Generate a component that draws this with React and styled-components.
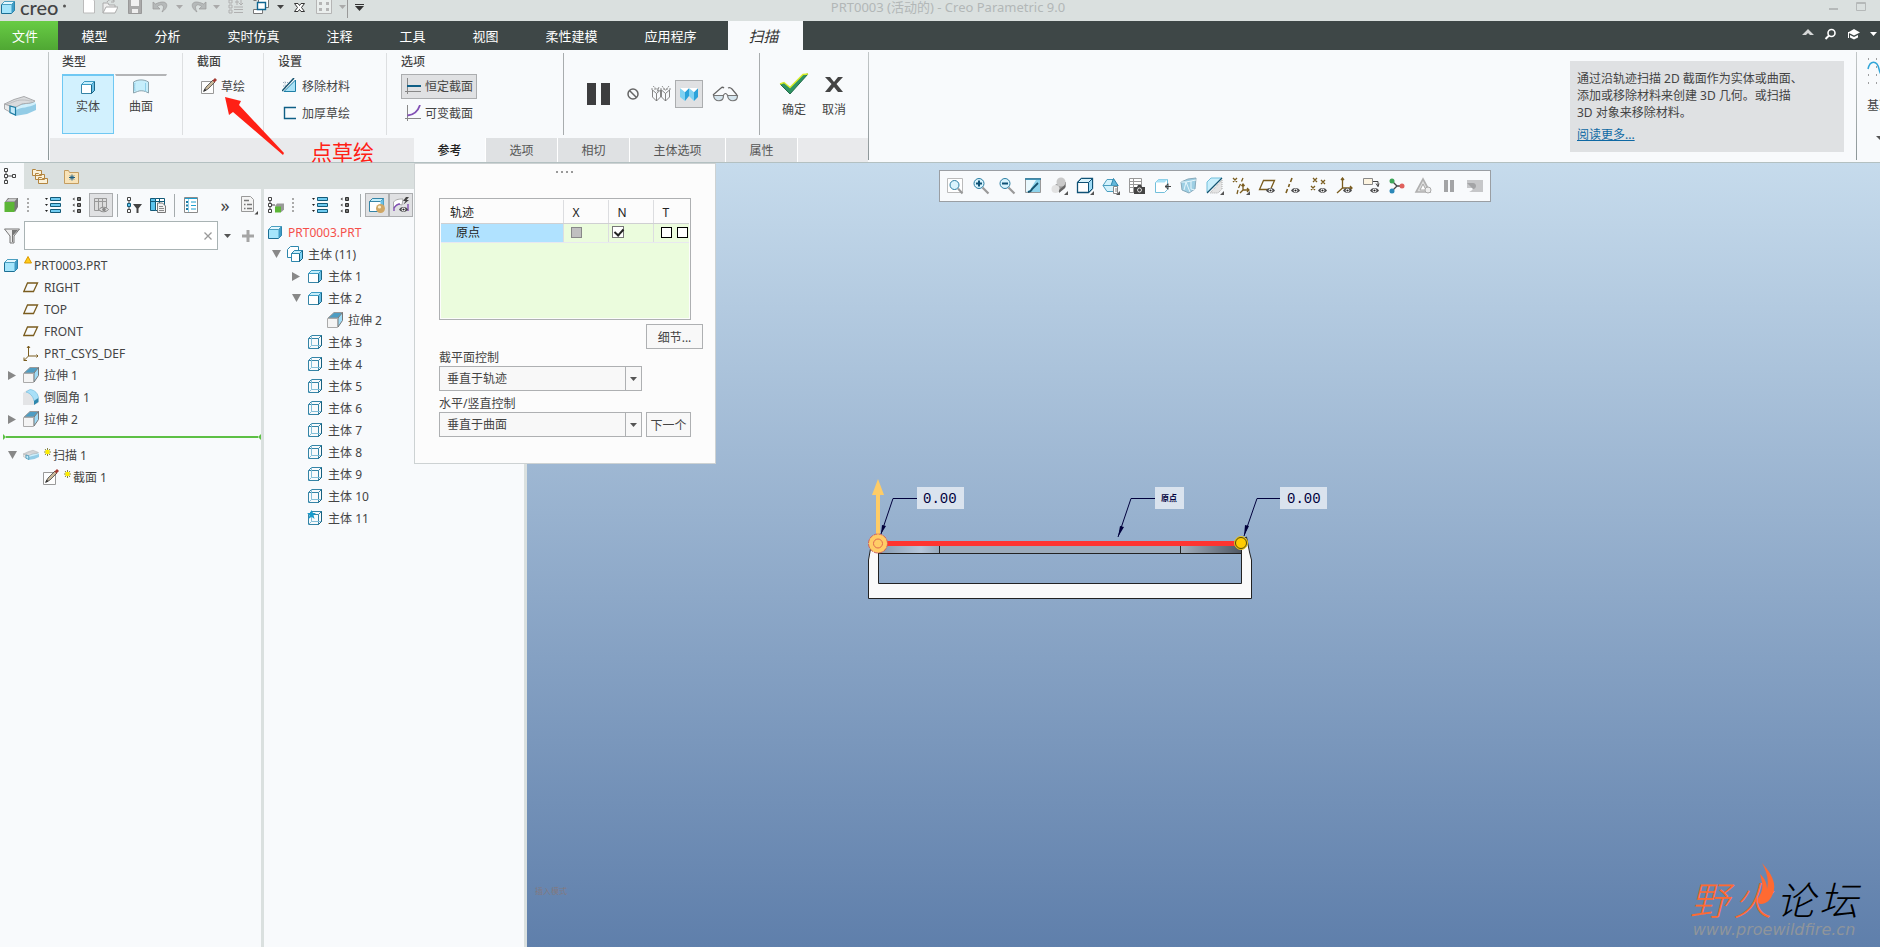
import React, { useState } from "react";
import styled, { createGlobalStyle } from "styled-components";

const GlobalStyle = createGlobalStyle`
  * {
    box-sizing: border-box;
  }

  body {
    margin: 0;
    overflow: hidden;
    font-family: "Noto Sans", "Noto Sans CJK SC", sans-serif;
    font-size: 12px;
    color: #444;
    background: #f8fafc;
  }

  button,
  input,
  select {
    font: inherit;
    color: inherit;
    margin: 0;
  }

  button {
    background: none;
    border: none;
    padding: 0;
    cursor: pointer;
  }

  svg {
    display: block;
    flex: none;
  }
`;

/* ---------- icons ---------- */

function Icon({ w = 16, h = 16, box, children }) {
  return (
    <svg width={w} height={h} viewBox={box || `0 0 ${w} ${h}`} fill="none" aria-hidden="true">
      {children}
    </svg>
  );
}

const PartIcon = () => (
  <Icon>
    <path d="M1.5 5.5l3-3h10v9l-3 3h-10z" fill="#a5e5fb" stroke="#1d6f94" />
    <path d="M11.5 5.5l3-3v9l-3 3z" fill="#3f9cc6" />
    <path d="M1.5 5.5l3-3h10l-3 3z" fill="#e4f8ff" stroke="#4b9fc0" />
  </Icon>
);

const BodyIcon = () => (
  <Icon>
    <path d="M1.5 5.5l3-3h10v9l-3 3h-10z" fill="#fff" stroke="#3584a6" />
    <path d="M11.5 5.5l3-3v9l-3 3z" fill="#6bc0e6" stroke="#1b6686" />
    <path d="M1.5 5.5l3-3h10l-3 3z" fill="#c5eefb" stroke="#3d9cc4" />
  </Icon>
);

const BodiesIcon = () => (
  <Icon>
    <path d="M.5 3.500l3-3h8v8l-3 3h-8z" fill="#fff" stroke="#2d87ad" />
    <path d="M4.500 7.500l3-3h8v8l-3 3h-8z" fill="#fff" stroke="#2d87ad" />
    <path d="M12.500 7.500l3-3v8l-3 3z" fill="#7cd2f5" stroke="#16607f" />
    <path d="M4.500 7.500l3-3h8l-3 3z" fill="#c5eefb" stroke="#2d87ad" />
  </Icon>
);

const EmptyBodyIcon = ({ star }) => (
  <Icon>
    <path d="M1.500 4.500l3-3h10v10l-3 3h-10zM1.500 4.500h10v10M11.500 4.500l3-3" stroke="#3584a6" />
    <path d="M4.500 1.500v10h10M4.500 11.500l-3 3" stroke="#83bfd8" />
    <path d="M14.500 1.500v10l-3 3" stroke="#17607f" />
    {star && <path d="M4.500 0l1.500 3H9L6.500 5l1 4-3-2.200-3 2.200 1-4L0 3h3z" fill="#1a9ccc" />}
  </Icon>
);

const ExtrudeIcon = () => (
  <Icon>
    <path d="M1 6l6-5.500h8.500L11 6z" fill="#4d9dc3" stroke="#999" />
    <path d="M11 6l4.500-5.500v8L11 15z" fill="#9fdcf7" stroke="#777" />
    <path d="M.5 6.500h10v9H.5z" fill="#f4f4f4" stroke="#aaa" />
  </Icon>
);

const RoundIcon = () => (
  <Icon>
    <path d="M0 4l4-3c6-1 11 2 11.500 9v4L11 16H0z" fill="#e3e4e6" />
    <path d="M3 3l4-2.500c5 .5 8 4 8.500 8.500L11 12C10 7 7 4 3 3z" fill="#a9e0f8" stroke="#6ab8dc" strokeWidth=".6" />
    <path d="M11 12l4.500-3v4L11 16z" fill="#2d87ad" />
  </Icon>
);

const PlaneIcon = () => (
  <Icon>
    <path d="M4.500 4h10l-4 8.500H.8z" stroke="#7a5c1e" strokeWidth="1.300" />
  </Icon>
);

const CsysIcon = () => (
  <Icon>
    <path d="M5.500 1v10H15M5.500 11L1 15.500M4 3l1.500-2L7 3M13.500 9.500L15 11l-1.500 1.500M1 12.500v3h3" stroke="#7a5c1e" />
  </Icon>
);

const SweepIcon = ({ w = 16, h = 16 }) => (
  <Icon w={w} h={h} box="0 0 32 20">
    <path d="M10 11l8-4 10-2 4 3v6l-9 4-12 2z" fill="#93cce6" />
    <path d="M10 11c6-3 12-2 21-5l1 2c-8 4-14 3-20 6z" fill="#d0effb" />
    <path d="M.5 8L10 3.500 20 .5l11 4.500c-4 3-9 2-13 3l-7 3.500z" fill="#dadbdd" stroke="#a9aaac" />
    <path d="M3 8c6-1 8-4 15-4s6 1 10 1" stroke="#bdbec0" />
    <path d="M.5 8l5.500 2v6L.5 13z" fill="#e8e9ea" stroke="#a9aaac" />
    <path d="M6 10l5.500 1.500V19L6 16.500z" fill="#c5eafa" stroke="#1d7ca3" strokeWidth="1.200" />
  </Icon>
);

const SketchIcon = () => (
  <Icon>
    <path d="M.5 3.500h12v12H.5z" fill="#fdfdfd" stroke="#999" />
    <path d="M3 13l2-4 7-7 2 2-7 7z" fill="#c9b89a" stroke="#444" strokeWidth=".8" />
    <path d="M11.500 2.500L14 0l2 2-2.500 2.500z" fill="#a33a32" />
    <path d="M2 14l1.500-3.500 2 2z" fill="#333" />
  </Icon>
);

const ListBlueIcon = () => (
  <Icon>
    <path d="M5.500.5h10v3h-10zM5.500 6.500h10v3h-10zM5.500 12.500h10v3h-10z" fill="#6fcbf0" stroke="#135a78" />
    <path d="M0 1h3L1.500 3zM0 7h3L1.500 9zM0 13h3l-1.500 2z" fill="#222" />
  </Icon>
);

const ListGreyIcon = () => (
  <Icon w={9}>
    <path d="M5.500.5h3v3h-3zM5.500 6.500h3v3h-3zM5.500 12.500h3v3h-3z" fill="#777" stroke="#333" />
    <path d="M2.500.5l-2 1.500 2 1.500zM2.500 6.500l-2 1.500 2 1.500zM2.500 12.500l-2 1.500 2 1.500z" fill="#444" />
  </Icon>
);

const Eye = ({ x = 0, y = 0 }) => (
  <g transform={`translate(${x} ${y})`}>
    <path d="M0 3.500C2 .2 7 .2 9 3.500 7 6.800 2 6.800 0 3.500z" fill="#4a4a4c" />
    <circle cx="4.500" cy="3.500" r="1.900" fill="#fff" />
    <circle cx="4.500" cy="3.500" r="1.100" fill="#222" />
  </g>
);

const TreeTabIcon = () => (
  <Icon w={12}>
    <path d="M.5.5h3v3h-3zM.5 6.500h3v3h-3zM.5 12.500h3v3h-3zM8.500 6.500h3v3h-3zM2 4v2M2 10v2M4 8h4" stroke="#444" />
  </Icon>
);

const FoldersIcon = () => (
  <Icon>
    <path d="M.5 1.500h3l1 1h5v5h-9zM3.500 5.500h3l1 1h5v5h-9zM6.500 9.500h3l1 1h5v5h-9z" fill="#fbf1d9" stroke="#b3853f" />
  </Icon>
);

const FavIcon = () => (
  <Icon>
    <path d="M.5 2.500h4l1 2h9v11H.5z" fill="#f8e3b8" stroke="#c49d60" />
    <path d="M8 6.500v6M5 9.500h6M6 7.500l4 4M10 7.500l-4 4" stroke="#1c5d82" />
  </Icon>
);

const GreenCubeIcon = () => (
  <Icon>
    <path d="M1 5l3-4h10v9l-3 5z" fill="#777" />
    <path d="M2 4.500l3-3h8l-2.500 3z" fill="#c9c9c9" />
    <path d="M.5 5h10v10H.5z" fill="#5cb637" />
  </Icon>
);

const TableEyeIcon = () => (
  <Icon>
    <path d="M1.500 1.500h12v12h-12zM1.500 4.500h12M5.500 1.500v12M9.500 1.500v12" fill="#dcdcdc" stroke="#999" />
    <path d="M6 12.500c2-3 7-3 9.500 0-2.500 3-7.500 3-9.500 0z" fill="#ddd" stroke="#888" />
    <circle cx="11" cy="12.500" r="1.800" fill="#888" />
  </Icon>
);

const TreeFilterIcon = () => (
  <Icon>
    <path d="M1.500.5h3v3h-3zM1.500 12.500h3v3h-3zM3 4v2M3 10v2" stroke="#444" />
    <path d="M1.500 6.500h3v3h-3z" fill="#5cc3ec" stroke="#135a78" />
    <path d="M7 7h9l-3.500 4.500V16h-2v-4.500z" fill="#444" />
  </Icon>
);

const ColumnsIcon = () => (
  <Icon>
    <path d="M.5 1.500h5v12h-5z" fill="#5cc3ec" stroke="#135a78" />
    <path d="M5.500 1.500h9v12h-9z" fill="#fff" stroke="#135a78" />
    <path d="M.5 4.500h14M9.500 1.500v12" stroke="#135a78" />
    <path d="M7.500 6h5l3 3v6.500h-8z" fill="#f2f2f2" stroke="#777" />
    <path d="M9 9.500h4M9 11.500h5M9 13.500h5" stroke="#888" />
  </Icon>
);

const SheetIcon = () => (
  <Icon w={14}>
    <path d="M.5.5h13v15H.5z" fill="#fff" stroke="#8a8a8a" />
    <path d="M1 1.500h12" stroke="#1fa0d0" />
    <path d="M4.500 2v13" stroke="#8fd0ea" />
    <path d="M2 5h2M2 8.500h2M2 12h2" stroke="#1b7aa3" strokeWidth="2" />
    <path d="M7 5h5M7 8.500h5M7 12h5" stroke="#1fa0d0" />
  </Icon>
);

const PageIcon = () => (
  <Icon w={17} h={19}>
    <path d="M.5.5h9l3 3v12H.5z" fill="#f4f4f4" stroke="#999" />
    <path d="M3 8.500h1.500M6 8.500h5M3 12.500h1.500M6 12.500h5M3 4.500h5" stroke="#777" strokeWidth="1.300" />
    <path d="M17 15v3.500h-3.500z" fill="#444" />
  </Icon>
);

const TreeCubeIcon = () => (
  <Icon>
    <path d="M.5.5h3v3h-3zM.5 6.500h3v3h-3zM.5 12.500h3v3h-3zM2 4v2M2 10v2M4 8h3" stroke="#444" />
    <path d="M7 9l2-2.500h7v6L13.500 15z" fill="#999" />
    <path d="M7 9.500h6v6H7z" fill="#5cb637" />
  </Icon>
);

const BallBodyIcon = () => (
  <Icon>
    <path d="M.5 4.500l3-3h11v10l-3 3H.5z" fill="#fff" stroke="#3584a6" />
    <path d="M.5 4.500l3-3h11l-3 3z" fill="#c5eefb" stroke="#3584a6" />
    <path d="M11.500 4.500l3-3v10l-3 3z" fill="#6bc0e6" />
    <circle cx="11.500" cy="11.500" r="4.500" fill="#d0a765" />
    <circle cx="10.500" cy="10" r="1.600" fill="#fbeecd" />
  </Icon>
);

const SurfaceEyeIcon = () => (
  <Icon>
    <path d="M.5 11V5C3 2 7 2 10 2l-1 6-4-1z" fill="#fff" stroke="#aaa" />
    <path d="M1 14v-3c2-3 4-4 6-4M15 7v7" stroke="#8250b5" strokeWidth="1.400" />
    <path d="M13 0l-3 4h2.500l-2 3.500L16 3h-2.500L16 0z" fill="#444" />
    <Eye x={6} y={9} />
  </Icon>
);

const FunnelIcon = () => (
  <Icon>
    <path d="M.5 1h15L10 8v7H6V8z" fill="#ededed" stroke="#777" />
    <path d="M8 2h6L9 7.500V14H8z" fill="#777" />
  </Icon>
);

const SweepCutIcon = () => (
  <Icon>
    <path d="M2 13.500L13.500 2v11.500z" fill="#a9e2f7" stroke="#1f7fa6" />
    <path d="M1 4.500h8M3 3.500v8M1 8h4" stroke="#9ab" strokeDasharray="1 1" />
    <path d="M0 13L12 0" stroke="#14536f" strokeWidth="1.500" />
  </Icon>
);

const ThickIcon = () => (
  <Icon>
    <path d="M14 2.500H2.500v11H14" stroke="#0f5f86" strokeWidth="1.400" />
  </Icon>
);

const ConstIcon = () => (
  <Icon>
    <path d="M2.500 0v16M0 13.500h16" stroke="#888" />
    <path d="M2 8h14" stroke="#0f5f86" strokeWidth="2" />
  </Icon>
);

const VarIcon = () => (
  <Icon>
    <path d="M2.500 0v16M0 13.500h16" stroke="#888" />
    <path d="M2.500 10.500C9 10 13 6 15 0" stroke="#8250b5" strokeWidth="1.800" />
  </Icon>
);

const SurfaceIcon = () => (
  <Icon>
    <path d="M.5 3C5 .2 11 .2 15.500 3v11l-3-1.500c-3-1-6-1-8 0L.5 14z" fill="#c6eefb" stroke="#8aa4ae" />
    <path d="M2 12C1.500 9 1.500 6 2 4M12.500 12.500V4" stroke="#8fcfe8" />
  </Icon>
);

/* ---------- title bar ---------- */

const TitleBar = styled.header`
  display: grid;
  grid-template-columns: 1fr auto 1fr;
  grid-template-rows: 14px;
  align-items: center;
  height: 21px;
  background: #dae0df;
`;

const QuickAccess = styled.div`
  display: flex;
  align-items: center;
  height: 14px;
`;

const Brand = styled.span`
  display: flex;
  align-items: center;
  gap: 4px;
  width: 80px;
  font: 500 20px/12px Lato, sans-serif;
  color: #444;
`;

const Quick = styled.button`
  display: flex;
  justify-content: center;
  align-items: center;
  width: ${(props) => props.$w || 23}px;
  height: 14px;
`;

const Rule = styled.i`
  width: 1px;
  height: 22px;
  background: #999;
`;

const DocTitle = styled.span`
  padding-left: 16px;
  font-size: 13px;
  line-height: 14px;
  color: #b2b7b7;
`;

const WindowButtons = styled.div`
  display: flex;
  justify-content: flex-end;
  gap: 2px;
  padding-right: 7px;
`;

const Tri = ({ color = "#aaa", w = 7 }) => (
  <Icon w={w} h={4} box="0 0 7 4">
    <path d="M0 0h7L3.500 4z" fill={color} />
  </Icon>
);

function Title() {
  return (
    <TitleBar>
      <QuickAccess>
        <Brand>
          <PartIcon />
          creo
          <Icon w={3} h={8}><circle cx="1.500" cy="3" r="1.500" fill="#555" /></Icon>
        </Brand>
        <Quick $w={18} aria-label="新建">
          <Icon><path d="M2.500-2h8l3 4v12h-11z" fill="#fff" stroke="#bbb" /></Icon>
        </Quick>
        <Quick aria-label="打开">
          <Icon>
            <path d="M1 14V4h5l1 2h6v2" fill="#eee" stroke="#aaa" />
            <path d="M1 14L4 8h12l-3 6z" fill="#fff" stroke="#aaa" />
            <path d="M5 3c2-3 5-3 7-1M12-.5V3H9" stroke="#aaa" />
          </Icon>
        </Quick>
        <Quick $w={28} aria-label="保存">
          <Icon>
            <path d="M1.500.5h13v14h-13z" fill="#aaa" stroke="#999" />
            <path d="M4 0h8v7H4z" fill="#f1f1f1" />
            <path d="M5 10h6v4H5z" fill="#eee" />
          </Icon>
        </Quick>
        <Quick $w={22} aria-label="撤消">
          <Icon>
            <path d="M1 3v7h7L5.500 7.500C9 4 14 6 10 13c8-5 6-14-6.500-8z" fill="#b5b9b9" stroke="#999" strokeWidth=".7" />
          </Icon>
        </Quick>
        <Quick $w={16} aria-label="撤消列表"><Tri /></Quick>
        <Quick aria-label="重做">
          <Icon>
            <path d="M15 3v7H8l2.500-2.500C7 4 2 6 6 13c-8-5-6-14 6.500-8z" fill="#b5b9b9" stroke="#999" strokeWidth=".7" />
          </Icon>
        </Quick>
        <Quick $w={12} aria-label="重做列表"><Tri /></Quick>
        <Quick $w={27} aria-label="重新生成">
          <Icon>
            <path d="M1 1h3v3H1zM1 6h3v3H1zM1 11h3v3H1zM6 8h9M6 10.500h9M6 13.500h9M7 3h4M9 1v5M13 0v5M11 4l2 2 2-2" stroke="#b0b0b0" />
          </Icon>
        </Quick>
        <Quick aria-label="窗口">
          <Icon>
            <path d="M5.500.5h10v8h-10zM.5 10.500h9v4h-9zM.5 1.500h3" fill="#fff" stroke="#777" />
            <path d="M4.500 3.500h8v7h-8z" fill="#fff" stroke="#0f6590" strokeWidth="1.400" />
          </Icon>
        </Quick>
        <Quick $w={16} aria-label="窗口列表"><Tri color="#444" /></Quick>
        <Quick aria-label="关闭">
          <Icon w={13} h={13}>
            <path d="M1.500 2.500H5l1.500 2 1.500-2h3.500L8.500 6.500l3 4H8l-1.500-2-1.500 2H1.500l3-4z" fill="#fff" stroke="#333" />
          </Icon>
        </Quick>
        <Quick $w={26} aria-label="网格">
          <Icon>
            <path d="M.5.5h15v14H.5z" fill="#eaeeed" stroke="#b5b5b5" />
            <path d="M3 3h3v3H3zM10 3h3v3h-3zM3 9h3v3H3zM10 9h3v3h-3z" fill="#b5b5b5" />
          </Icon>
        </Quick>
        <Quick $w={10} aria-label="网格列表"><Tri /></Quick>
        <Rule />
        <Quick aria-label="自定义">
          <Icon w={9} h={7}>
            <path d="M0 .5h9" stroke="#333" />
            <path d="M0 2h9L4.500 7z" fill="#333" />
          </Icon>
        </Quick>
      </QuickAccess>
      <DocTitle>PRT0003 (活动的) - Creo Parametric 9.0</DocTitle>
      <WindowButtons>
        <Quick $w={25} aria-label="最小化">
          <Icon w={10} h={10}><path d="M0 6h9v2H0z" fill="#b5b9b9" /></Icon>
        </Quick>
        <Quick $w={25} aria-label="最大化">
          <Icon w={10} h={10}><path d="M.5.5h9v8h-9zM0 1.500h10" stroke="#b5b9b9" /></Icon>
        </Quick>
      </WindowButtons>
    </TitleBar>
  );
}

/* ---------- menu bar ---------- */

const MenuBar = styled.nav`
  display: flex;
  height: 29px;
  background: #3e4747;
`;

const MenuItem = styled.button`
  width: ${(props) => (props.$wide ? 99 : 73)}px;
  color: #fff;
  font-size: 13px;
`;

const FileItem = styled(MenuItem)`
  width: 58px;
  padding-right: 8px;
  background: linear-gradient(#68cc45, #4fa733);
`;

const ActiveItem = styled(MenuItem)`
  width: 75px;
  margin-left: 8px;
  padding-right: 4px;
  background: #f8fafc;
  color: #333;
  font-size: 15px;
  font-style: italic;
`;

const MenuTools = styled.div`
  display: flex;
  align-items: center;
  margin-left: auto;
  padding: 0 3px 4px 0;
  gap: 7px;
`;

const menus = ["模型", "分析", "实时仿真", "注释", "工具", "视图", "柔性建模", "应用程序"];

function Menu() {
  return (
    <MenuBar>
      <FileItem>文件</FileItem>
      {menus.map((name) => (
        <MenuItem key={name} $wide={name.length > 2}>{name}</MenuItem>
      ))}
      <ActiveItem>扫描</ActiveItem>
      <MenuTools>
        <button aria-label="折叠功能区">
          <Icon w={16} h={12}><path d="M2 7l6-6 6 6h-4L8 5 6 7z" fill="#d5d7d7" /></Icon>
        </button>
        <button aria-label="搜索">
          <Icon w={16} h={12}>
            <circle cx="8.500" cy="5" r="3.500" stroke="#fff" strokeWidth="1.600" />
            <path d="M6 7.500L2.500 11" stroke="#fff" strokeWidth="2" />
          </Icon>
        </button>
        <button aria-label="学习">
          <Icon w={16} h={12}>
            <path d="M2 4.500l6-3.500 6 3.500-6 3zM4 7l4 2 4-2v2.500l-4 2-4-2zM2 4h1v6H2z" fill="#fff" />
          </Icon>
        </button>
        <Quick $w={8} aria-label="更多"><Tri color="#fff" /></Quick>
      </MenuTools>
    </MenuBar>
  );
}

/* ---------- ribbon ---------- */

const Ribbon = styled.section`
  display: flex;
  height: 113px;
  border-bottom: 1px solid #b3c0c1;
  background: #f8fafc;
`;

const FeatureCell = styled.div`
  display: flex;
  align-items: center;
  width: 48px;
  padding-left: 4px;
`;

const Divider = styled.i`
  width: 1px;
  margin: 2px 0;
  background: linear-gradient(#c3c7c8, #8c9698);
`;

const Dashboard = styled.div`
  display: flex;
  flex-direction: column;
  padding-left: 1px;
`;

const Groups = styled.div`
  display: flex;
  height: 88px;
`;

const Group = styled.div`
  width: ${(props) => props.$w}px;
  padding: 4px 0 0 ${(props) => props.$pad || 14}px;
  border-right: 1px solid transparent;
  border-image: linear-gradient(
      transparent 5%,
      ${(props) => (props.$strong ? "#a8acae" : "#dddfe1")} 5%,
      ${(props) => (props.$strong ? "#a8acae" : "#dddfe1")} 95%,
      transparent 95%
    )
    1;
`;

const GroupTitle = styled.h2`
  margin: 0 0 4px;
  font-size: 12px;
  font-weight: 500;
  line-height: 16px;
`;

const TypeButton = styled.button`
  width: 52px;
  height: 60px;
  margin-right: 1px;
  padding-bottom: 16px;
  border: 1px solid ${(props) => (props.$on ? "#6fc8f3" : "transparent")};
  border-top: 2px solid ${(props) => (props.$on ? "#6fc8f3" : "#b3b4b6")};
  background: ${(props) => (props.$on ? "#d2f1fe" : "none")};

  svg {
    margin: 0 auto 2px;
  }
`;

const Tool = styled.button`
  display: flex;
  align-items: center;
  gap: 4px;
  height: 25px;
  margin-bottom: 2px;
  padding: 0 3px 1px;
  border: 1px solid ${(props) => (props.$on ? "#abadaf" : "transparent")};
  background: ${(props) => (props.$on ? "#e0e1e3" : "none")};
`;

const Controls = styled(Group)`
  display: flex;
  align-items: center;
  padding-top: 0;
`;

const Verdicts = styled.div`
  display: flex;
  align-items: center;
  width: 108px;
  padding: 3px 0 0 14px;
`;

const Control = styled.button`
  display: flex;
  justify-content: center;
  align-items: center;
  width: ${(props) => props.$w || 28}px;
  height: 28px;
  border: 1px solid ${(props) => (props.$on ? "#abadaf" : "transparent")};
  background: ${(props) => (props.$on ? "#e0e1e3" : "none")};
`;

const Verdict = styled.button`
  display: flex;
  flex-direction: column;
  align-items: center;
  gap: 7px;
  width: 40px;
  line-height: 16px;
`;

const TabRow = styled.div`
  display: flex;
  height: 24px;
  padding-right: 1px;
  background: #e9eaec;
`;

const Tab = styled.button`
  width: ${(props) => props.$w || 72}px;
  border-right: 1px solid #fff;
  background: ${(props) => (props.$on ? "#f8fafc" : "#dfe1e3")};
  color: ${(props) => (props.$on ? "#222" : "#555")};
  font-weight: ${(props) => (props.$on ? 500 : 400)};

  &:first-child {
    margin-left: 364px;
  }
`;

const HelpCard = styled.aside`
  width: 274px;
  height: 91px;
  margin: 11px 12px 0 auto;
  padding: 9px 7px;
  background: #dfe1e3;
  line-height: 17px;

  p {
    margin: 0 0 5px;
    max-width: 228px;
  }

  a {
    color: #0f69a4;
  }
`;

const Overflow = styled.div`
  display: flex;
  flex-direction: column;
  align-items: flex-start;
  gap: 10px;
  width: 23px;
  padding: 8px 0 0 10px;
  overflow: hidden;
  white-space: nowrap;
`;

const tabs = ["参考", "选项", "相切", "主体选项", "属性"];

function RibbonBar() {
  const [type, setType] = useState("实体");
  const [section, setSection] = useState("恒定截面");
  const [tab, setTab] = useState("参考");

  return (
    <Ribbon>
      <FeatureCell>
        <SweepIcon w={32} h={20} />
      </FeatureCell>
      <Divider />
      <Dashboard>
        <Groups>
          <Group $w={133} $pad={12}>
            <GroupTitle>类型</GroupTitle>
            <TypeButton $on={type === "实体"} onClick={() => setType("实体")}>
              <BodyIcon />
              实体
            </TypeButton>
            <TypeButton $on={type === "曲面"} onClick={() => setType("曲面")}>
              <SurfaceIcon />
              曲面
            </TypeButton>
          </Group>
          <Group $w={81}>
            <GroupTitle>截面</GroupTitle>
            <Tool><SketchIcon />草绘</Tool>
          </Group>
          <Group $w={123}>
            <GroupTitle>设置</GroupTitle>
            <Tool><SweepCutIcon />移除材料</Tool>
            <Tool><ThickIcon />加厚草绘</Tool>
          </Group>
          <Group $w={177} $strong>
            <GroupTitle>选项</GroupTitle>
            <Tool $on={section === "恒定截面"} onClick={() => setSection("恒定截面")}>
              <ConstIcon />恒定截面
            </Tool>
            <Tool $on={section === "可变截面"} onClick={() => setSection("可变截面")}>
              <VarIcon />可变截面
            </Tool>
          </Group>
          <Controls $w={196} $strong>
            <Control $w={41} aria-label="暂停">
              <Icon w={24} h={22}><path d="M0 0h9v22H0zM14 0h9v22h-9z" fill="#3d3d3f" /></Icon>
            </Control>
            <Control aria-label="无预览">
              <Icon w={14} h={14}>
                <circle cx="7" cy="7" r="5" stroke="#666" strokeWidth="1.500" />
                <path d="M3.500 3.500l7 7" stroke="#666" strokeWidth="1.500" />
              </Icon>
            </Control>
            <Control aria-label="分离">
              <Icon w={20} h={16}>
                <path d="M1.500 4l4 3.500 4-3.500M1.500 4v7l4 4 4-4V4M5.500 7.500V15M10.500 4l4 3.500 4-3.500M10.500 4v7l4 4 4-4V4M14.500 7.500V15" stroke="#777" strokeWidth=".9" />
                <path d="M0 3h20M2 0l6 5M8 1L6 6M11 0l4 5M18 0l-4 5" stroke="#777" strokeWidth=".8" strokeDasharray="2 1" />
              </Icon>
            </Control>
            <Control $on aria-label="连接">
              <Icon w={18} h={14}>
                <path d="M0 1l5 4v9l-5-4zM9 1l5 4v9l-5-5z" fill="#7fd1f2" />
                <path d="M5 5l4-4v8l-4 5zM14 5l4-4v9l-4 4z" fill="#2ba2da" />
                <path d="M0 1l5 4 4-4zM9 1l5 4 4-4z" fill="#fff" />
              </Icon>
            </Control>
            <Control $w={44} aria-label="眼镜">
              <Icon w={27} h={16}>
                <path d="M1.500 9.500h10c0 7-9 7-10 0zM15.500 9.500h10c0 7-9 7-10 0z" fill="#d5e5ee" stroke="#777" strokeWidth="1.200" />
                <path d="M1 9l8-7c1-1 2-1 3 0M16 2c2-1 3 0 4 1l5 6M11.500 9c1.500-2 2.500-2 4 0" stroke="#666" strokeWidth="1.200" />
              </Icon>
            </Control>
          </Controls>
          <Verdicts>
            <Verdict>
              <Icon w={30} h={22}>
                <path d="M1 11l4-1 6 5L24 2l5-1-18 20z" fill="#2e9463" stroke="#246b4a" />
                <path d="M1 11l4-1.500 6 5L24 1.500l5-.5" stroke="#d7ee2a" strokeWidth="1.400" />
              </Icon>
              确定
            </Verdict>
            <Verdict>
              <Icon w={20} h={22}>
                <path d="M1 4h5l4 5 4-5h5l-6.500 7L19 19h-5l-4-5-4 5H1l6.500-8z" fill="#444" />
              </Icon>
              取消
            </Verdict>
          </Verdicts>
        </Groups>
        <TabRow>
          {tabs.map((name) => (
            <Tab
              key={name}
              $w={name.length > 2 ? 96 : 72}
              $on={tab === name}
              onClick={() => setTab(name)}
            >
              {name}
            </Tab>
          ))}
        </TabRow>
      </Dashboard>
      <Divider />
      <HelpCard>
        <p>通过沿轨迹扫描 2D 截面作为实体或曲面、添加或移除材料来创建 3D 几何。或扫描 3D 对象来移除材料。</p>
        <a href="#more">阅读更多...</a>
      </HelpCard>
      <Divider />
      <Overflow>
        <Icon w={28} h={28}>
          <path d="M1 1h28M1 9h28M1 17h28M1 25h28" stroke="#444" strokeDasharray="1 7" />
          <path d="M1 11C3 2 10 2 12 11s6 10 9 6" stroke="#33a6d8" strokeWidth="1.500" />
        </Icon>
        基准
        <Icon w={16} h={30}>
          <path d="M9 12h8l-4 4z" fill="#555" />
        </Icon>
      </Overflow>
    </Ribbon>
  );
}

/* ---------- side panels ---------- */

const Workspace = styled.main`
  position: relative;
  display: flex;
  flex: 1;
  min-height: 0;
`;

const Side = styled.div`
  display: flex;
  flex-direction: column;
  width: 527px;
`;

const SideTabs = styled.div`
  display: flex;
  height: 26px;
  background: #dae0df;
`;

const SideTab = styled.button`
  display: flex;
  justify-content: center;
  align-items: center;
  width: ${(props) => (props.$on ? 24 : 32)}px;
  padding: ${(props) => (props.$on ? "0 5px 1px 0" : "0 1px 1px 0")};
  background: ${(props) => (props.$on ? "#f8fafc" : "none")};
`;

const Panels = styled.div`
  display: flex;
  flex: 1;
`;

const Panel = styled.section`
  width: ${(props) => props.$w}px;
  border-right: 3px solid #dae0df;
`;

const Toolbar = styled.div`
  display: flex;
  align-items: center;
  height: 32px;
`;

const ToolIcon = styled.button`
  display: flex;
  flex: none;
  justify-content: center;
  align-items: center;
  width: ${(props) => props.$w || 24}px;
  height: 24px;
  border: 1px solid ${(props) => (props.$on ? "#abadaf" : "transparent")};
  background: ${(props) => (props.$on ? "#e0e1e3" : "none")};
  font-size: 18px;
  line-height: 20px;
`;

const Spacer = styled.i`
  flex: none;
  width: 6px;
`;

const ToolRule = styled.i`
  width: 1px;
  height: 23px;
  margin: 0 4px;
  background: #a5abad;
`;

const Grip = styled.i`
  width: 2px;
  height: 15px;
  margin: 0 8px 0 4px;
  background: repeating-linear-gradient(#aaa 0 2px, transparent 2px 4px);
`;

const SearchRow = styled.div`
  display: flex;
  align-items: center;
  height: 29px;
  padding-left: 4px;
  gap: 4px;
`;

const SearchBox = styled.label`
  display: flex;
  align-items: center;
  width: 194px;
  height: 29px;
  padding: 0 5px;
  border: 1px solid #a9b3b4;
  background: #fff;

  input {
    flex: 1;
    min-width: 0;
    border: none;
    outline: none;
  }
`;

const Tree = styled.ul`
  margin: 0;
  padding: ${(props) => props.$top}px 0 0;
  list-style: none;
`;

const Node = styled.li`
  display: flex;
  align-items: center;
  height: 22px;
  padding-left: ${(props) => (props.$level ? props.$level * 20 - 16 : 3)}px;
  color: ${(props) => (props.$alert ? "#f5504b" : "#444")};
  white-space: pre;

  > svg {
    margin-right: 5px;
  }
`;

const Slot = styled.button`
  display: flex;
  justify-content: center;
  width: 16px;
  margin-right: 3px;
`;

const Mark = styled.span`
  align-self: flex-start;
  margin-right: 2px;
`;

const InsertBar = styled.li`
  display: flex;
  align-items: center;
  height: 14px;
  margin: 0 0 0 3px;

  &::before,
  &::after {
    content: "";
    border: 3px solid transparent;
    border-left-color: #5dc045;
    border-right: 0;
  }

  &::after {
    border-left: 0;
    border-right: 3px solid #5dc045;
  }

  i {
    flex: 1;
    height: 2px;
    background: #5dc045;
  }
`;

function TreeNode({ level = 0, icon, open, mark, alert, children }) {
  return (
    <Node $level={level} $alert={alert}>
      {level > 0 && (
        <Slot as={open === undefined ? "span" : "button"} aria-label={open === undefined ? undefined : "展开"}>
          {open === true && <Icon w={9} h={8}><path d="M0 0h9L4.500 8z" fill="#888" /></Icon>}
          {open === false && <Icon w={8} h={9}><path d="M0 0v9l8-4.500z" fill="#888" /></Icon>}
        </Slot>
      )}
      {icon}
      {mark === "warn" && (
        <Mark>
          <Icon w={8} h={10}>
            <path d="M4 2.500L7.500 9h-7z" fill="#ffcc1a" stroke="#dc9b00" />
          </Icon>
        </Mark>
      )}
      {mark === "new" && (
        <Mark>
          <Icon w={7} h={12}>
            <path d="M3.500 4v8M0 8h7M1 5l5 6M6 5l-5 6" stroke="#6b6b10" strokeWidth=".8" />
            <path d="M1.500 6h4v4h-4z" fill="#ffee00" />
          </Icon>
        </Mark>
      )}
      {children}
    </Node>
  );
}

const emptyBodies = [3, 4, 5, 6, 7, 8, 9, 10, 11];

function SidePanels() {
  const [query, setQuery] = useState("");

  return (
    <Side>
      <SideTabs>
        <SideTab $on aria-label="模型树"><TreeTabIcon /></SideTab>
        <SideTab aria-label="文件夹"><FoldersIcon /></SideTab>
        <SideTab aria-label="收藏夹"><FavIcon /></SideTab>
      </SideTabs>
      <Panels>
        <Panel $w={264}>
          <Toolbar>
            <ToolIcon $w={23} aria-label="模型"><GreenCubeIcon /></ToolIcon>
            <Grip />
            <ToolIcon $w={32} aria-label="展开全部"><ListBlueIcon /></ToolIcon>
            <ToolIcon $w={14} aria-label="折叠全部"><ListGreyIcon /></ToolIcon>
            <Spacer />
            <ToolIcon $on aria-label="列显示"><TableEyeIcon /></ToolIcon>
            <ToolRule />
            <ToolIcon aria-label="过滤器"><TreeFilterIcon /></ToolIcon>
            <ToolIcon aria-label="树列"><ColumnsIcon /></ToolIcon>
            <ToolRule />
            <ToolIcon aria-label="表"><SheetIcon /></ToolIcon>
            <Spacer />
            <ToolIcon $w={32} aria-label="更多">»</ToolIcon>
            <ToolIcon $w={17} aria-label="设置"><PageIcon /></ToolIcon>
          </Toolbar>
          <SearchRow>
            <FunnelIcon />
            <SearchBox>
              <input aria-label="搜索模型树" value={query} onChange={(e) => setQuery(e.target.value)} />
              <button aria-label="清除" onClick={() => setQuery("")}>
                <Icon w={8} h={8}><path d="M.5.5l7 7M7.500.5l-7 7" stroke="#999" strokeWidth="1.300" /></Icon>
              </button>
            </SearchBox>
            <Quick $w={11} aria-label="搜索选项"><Tri color="#555" /></Quick>
            <Quick $w={22} aria-label="添加">
              <Icon w={12} h={12}><path d="M6 0v12M0 6h12" stroke="#a5a5a5" strokeWidth="3" /></Icon>
            </Quick>
          </SearchRow>
          <Tree $top={4}>
            <TreeNode icon={<PartIcon />} mark="warn">PRT0003.PRT</TreeNode>
            <TreeNode level={1} icon={<PlaneIcon />}>RIGHT</TreeNode>
            <TreeNode level={1} icon={<PlaneIcon />}>TOP</TreeNode>
            <TreeNode level={1} icon={<PlaneIcon />}>FRONT</TreeNode>
            <TreeNode level={1} icon={<CsysIcon />}>PRT_CSYS_DEF</TreeNode>
            <TreeNode level={1} icon={<ExtrudeIcon />} open={false}>拉伸 1</TreeNode>
            <TreeNode level={1} icon={<RoundIcon />}>倒圆角 1</TreeNode>
            <TreeNode level={1} icon={<ExtrudeIcon />} open={false}>拉伸 2</TreeNode>
            <InsertBar><i /></InsertBar>
            <TreeNode level={1} icon={<SweepIcon />} open mark="new">扫描 1</TreeNode>
            <TreeNode level={2} icon={<SketchIcon />} mark="new">截面 1</TreeNode>
          </Tree>
        </Panel>
        <Panel $w={263}>
          <Toolbar>
            <ToolIcon aria-label="设计树"><TreeCubeIcon /></ToolIcon>
            <Grip />
            <ToolIcon $w={36} aria-label="展开全部"><ListBlueIcon /></ToolIcon>
            <ToolIcon $w={12} aria-label="折叠全部"><ListGreyIcon /></ToolIcon>
            <Spacer />
            <ToolRule />
            <ToolIcon $on aria-label="主体外观"><BallBodyIcon /></ToolIcon>
            <ToolIcon $on aria-label="面组显示"><SurfaceEyeIcon /></ToolIcon>
          </Toolbar>
          <Tree $top={0}>
            <TreeNode icon={<PartIcon />} alert>PRT0003.PRT</TreeNode>
            <TreeNode level={1} icon={<BodiesIcon />} open>主体 (11)</TreeNode>
            <TreeNode level={2} icon={<BodyIcon />} open={false}>主体 1</TreeNode>
            <TreeNode level={2} icon={<BodyIcon />} open>主体 2</TreeNode>
            <TreeNode level={3} icon={<ExtrudeIcon />}>拉伸 2</TreeNode>
            {emptyBodies.map((n) => (
              <TreeNode key={n} level={2} icon={<EmptyBodyIcon star={n === 11} />}>主体 {n}</TreeNode>
            ))}
          </Tree>
        </Panel>
      </Panels>
    </Side>
  );
}

/* ---------- reference drop-down ---------- */

const Slide = styled.section`
  position: absolute;
  top: 0;
  left: 414px;
  width: 302px;
  height: 301px;
  padding: 7px 24px 0;
  border: 1px solid #cdd2d3;
  background: #fcfcfc;
`;

const DragDots = styled.i`
  display: block;
  width: 18px;
  height: 2px;
  margin: 0 auto 25px;
  background: repeating-linear-gradient(90deg, #999 0 2px, transparent 2px 5px);
`;

const Collector = styled.div`
  width: 252px;
  height: 122px;
  padding: 1px;
  border: 1px solid #aeb0b2;
  background: #ebfcdd content-box;
`;

const Grid = styled.table`
  width: 100%;
  table-layout: fixed;
  border-collapse: collapse;
  color: #222;

  th {
    height: 23px;
    padding: 2px 0 0 9px;
    border-bottom: 1px solid #cfd0d2;
    background: #fcfcfc;
    font-weight: 400;
    text-align: left;
  }

  td {
    height: 19px;
    padding: 0 0 0 7px;
    border-bottom: 1px solid #e8e8f0;
    white-space: nowrap;
    line-height: 16px;
  }

  th + th,
  td + td {
    border-left: 1px solid #dcdde0;
  }

  td:first-child {
    padding-left: 15px;
    background: #b0e2ff;
  }

  td:nth-child(3) {
    padding-left: 3px;
  }
`;

const Check = styled.input`
  appearance: none;
  width: 11px;
  height: 11px;
  margin: 0 5px 2px 0;
  border: 1px solid #000;
  background: #fff;
  vertical-align: middle;

  &:disabled {
    border-color: #888;
    background: #c0c0c0;
  }

  &:checked {
    width: 12px;
    height: 12px;
    border-color: #777;
  }

  &:checked::after {
    content: "";
    display: block;
    width: 4px;
    height: 7px;
    margin: 0 0 0 3px;
    border: solid #222;
    border-width: 0 2px 2px 0;
    transform: rotate(42deg);
  }
`;

const PushButton = styled.button`
  display: block;
  width: ${(props) => props.$w}px;
  height: 25px;
  border: 1px solid #aeb0b2;
  background: #f8f8f8;
  white-space: nowrap;
`;

const DetailsButton = styled(PushButton)`
  margin: 4px 0 0 207px;
`;

const FieldLabel = styled.label`
  display: block;
  height: 17px;
  line-height: 17px;
`;

const FieldRow = styled.div`
  display: flex;
  gap: 4px;
  margin-bottom: 4px;
`;

const SelectBox = styled.div`
  display: flex;
  width: 203px;
  height: 25px;
  border: 1px solid #aeb0b2;
  background: #f8f8f8;

  select {
    flex: 1;
    appearance: none;
    border: none;
    padding: 0 7px;
    background: none;
  }

  span {
    display: flex;
    justify-content: center;
    align-items: center;
    width: 16px;
    border-left: 1px solid #aeb0b2;
  }
`;

function Select({ id, value }) {
  return (
    <SelectBox>
      <select id={id} defaultValue={value}>
        <option>{value}</option>
      </select>
      <span><Tri color="#555" /></span>
    </SelectBox>
  );
}

function ReferenceSlide() {
  return (
    <Slide>
      <DragDots />
      <Collector>
        <Grid>
          <colgroup>
            <col width="122" />
            <col width="45" />
            <col width="45" />
            <col width="36" />
          </colgroup>
          <thead>
            <tr>
              <th>轨迹</th>
              <th>X</th>
              <th>N</th>
              <th>T</th>
            </tr>
          </thead>
          <tbody>
            <tr>
              <td>原点</td>
              <td><Check type="checkbox" disabled aria-label="X" /></td>
              <td><Check type="checkbox" defaultChecked aria-label="N" /></td>
              <td>
                <Check type="checkbox" aria-label="T 1" />
                <Check type="checkbox" aria-label="T 2" />
              </td>
            </tr>
          </tbody>
        </Grid>
      </Collector>
      <DetailsButton $w={57}>细节...</DetailsButton>
      <FieldLabel htmlFor="plane">截平面控制</FieldLabel>
      <FieldRow>
        <Select id="plane" value="垂直于轨迹" />
      </FieldRow>
      <FieldLabel htmlFor="direction">水平/竖直控制</FieldLabel>
      <FieldRow>
        <Select id="direction" value="垂直于曲面" />
        <PushButton $w={45}>下一个</PushButton>
      </FieldRow>
    </Slide>
  );
}

/* ---------- graphics area ---------- */

const Viewport = styled.section`
  position: relative;
  display: flex;
  flex: 1;
  justify-content: center;
  align-items: flex-start;
  padding: 7px 0 0 23px;
  background: linear-gradient(#c6dbec, #5f7fab);
`;

const ViewBar = styled.div`
  display: flex;
  height: 32px;
  padding: 0 2px;
  border: 1px solid #9a9ea3;
  background: #f8fafc;
`;

const ViewButton = styled.button`
  display: flex;
  justify-content: center;
  align-items: center;
  width: 26px;
`;

const Model = styled.div`
  position: absolute;
  top: 307px;
  left: 323px;

  text {
    font: 14px "Liberation Mono", monospace;
    fill: #00003c;
  }

  text.small {
    font: 8px "Noto Sans CJK SC", sans-serif;
    font-weight: 700;
  }
`;

const Mode = styled.span`
  position: absolute;
  left: 8px;
  bottom: 50px;
  color: #82797f;
  font-size: 8px;
  line-height: 12px;
`;

const Watermark = styled.div`
  position: absolute;
  right: 22px;
  bottom: 8px;
  width: 168px;

  strong {
    display: flex;
    justify-content: space-between;
    font: italic 300 39px/45px "Noto Sans CJK SC", sans-serif;
    color: #000;
  }

  em {
    color: #ff6a32;
  }

  small {
    display: block;
    text-align: center;
    font: italic 16px/18px "DejaVu Sans", sans-serif;
    color: #8f959b;
  }

  svg {
    position: absolute;
    left: 67px;
    bottom: 34px;
  }
`;

const brown = "#7a5c1e";
const Corner = () => <path d="M17 13v4h-4z" fill="#555" />;

const viewTools = [
  ["重新调整", <><path d="M.5.5h15v14H.5z" fill="#fff" stroke="#bbb" /><circle cx="7.500" cy="7" r="4.500" fill="#d9f4fd" stroke="#2a7ea3" /><path d="M11 10.500l4.500 5" stroke="#999" strokeWidth="2" /></>],
  ["放大", <><circle cx="6" cy="5.500" r="5" fill="#d9f4fd" stroke="#2a7ea3" /><path d="M6 2.500v6M3 5.500h6" stroke="#0f5276" strokeWidth="2" /><path d="M9.500 9.500l6 6" stroke="#999" strokeWidth="2.200" /></>],
  ["缩小", <><circle cx="6" cy="5.500" r="5" fill="#d9f4fd" stroke="#2a7ea3" /><path d="M3 5.500h6" stroke="#0f5276" strokeWidth="2" /><path d="M9.500 9.500l6 6" stroke="#999" strokeWidth="2.200" /></>],
  ["重画", <><path d="M.5.5h15v14H.5z" fill="#8ed3eb" stroke="#999" /><path d="M1 2h10L5 12l-4 2z" fill="#e9f8fd" /><path d="M13 5l-6 6c-1 2-1 3-4 3" stroke="#14536f" strokeWidth="1.800" /><path d="M0 1h16" stroke="#2a7ea3" strokeWidth="1.500" /></>],
  ["着色", <><path d="M4 7l5-3h6v5l-6 5H4z" fill="#999" /><circle cx="10" cy="4" r="4.500" fill="#c9c9c9" /><circle cx="4.500" cy="11" r="4" fill="#e2e2e2" /><path d="M8 12l6-5v3l-6 5z" fill="#666" /><Corner /></>],
  ["显示样式", <><path d="M.5 4.500l4-4h11v10l-4 4H.5z" fill="#fff" stroke="#0f5276" strokeWidth="1.300" /><path d="M.5 4.500l4-4h11l-4 4z" fill="#d8f3fc" stroke="#0f5276" /><path d="M11.500 4.500l4-4v10l-4 4z" fill="#9fdcf7" stroke="#0f5276" /><Corner /></>],
  ["已保存方向", <><path d="M0 7.500l4-6h6l5 6-5 6H4z" fill="#d3f2fc" stroke="#4b9fc0" /><path d="M10.500.5l4.500 7H8z" fill="#63b7da" stroke="#2d87ad" /><path d="M0 7.500h14" stroke="#4b9fc0" /><path d="M10.500 8.500h4v7h-4zM12 11h2M12 13h2" fill="#fff" stroke="#888" /><Corner /></>],
  ["视图管理器", <><path d="M.5.5h12v14H.5zM.5 3.500h12M.5 6.500h12M.5 9.500h12M4.500.5v14" fill="#fff" stroke="#999" /><path d="M5 9h3l1-2h3l1 2h3v7H5z" fill="#444" /><circle cx="10.500" cy="12" r="2" stroke="#ddd" /></>],
  ["外观", <><path d="M.5 4.500l3-3h9v10l-3 3h-9z" fill="#fff" stroke="#72bfdb" /><path d="M.5 4.500l3-3h9l-3 3z" fill="#a9e2f7" /><path d="M10 8.500h6M13 5.500v6M10 8.500l3-2.500M10 8.500l3 2.500" stroke="#444" /></>],
  ["透视图", <><path d="M0 4l7-3 8-1-1 11-6 4-7-3z" fill="#9dcfe4" stroke="#8ab" /><path d="M5 4l10-2M5 4L3 12M5 4L0 4M5 4l4 10M10 3v8l4 1" stroke="#e6f6fc" /></>],
  ["截面", <><path d="M0 4l4-4h11L1 14H0z" fill="#c9effc" stroke="#72bfdb" /><path d="M15 2v9l-4 4H3z" fill="#e4e4e4" stroke="#aaa" strokeDasharray="1 1" /><path d="M0 15L15 0" stroke="#14536f" strokeWidth="1.300" /><Corner /></>],
  ["基准显示过滤器", <><path d="M0 0l4 4M4 0L0 4M10 0L8.500 3.500M7.500 6l-2 4M5 12l-1 4M10 6v6h6M10 12l-3 3M8.500 8L10 6l1.500 2M14 10l2 2-2 2" stroke={brown} strokeWidth="1.300" /><Corner /></>],
  ["平面显示", <><path d="M4.500 2.500h11l-4 9H.5z" stroke={brown} strokeWidth="1.300" /><Eye x={7} y={9} /></>],
  ["轴显示", <><path d="M7 0L5.500 4M4.500 6l-1 3M2.500 11L1 15" stroke={brown} strokeWidth="1.600" /><Eye x={6} y={9} /></>],
  ["点显示", <><path d="M2 0l4 4M6 0L2 4M10 2l4 4M14 2l-4 4M0 8l4 4M4 8l-4 4" stroke={brown} strokeWidth="1.300" /><Eye x={7} y={9} /></>],
  ["坐标系显示", <><path d="M5.500 0v10H14M5.500 10L0 15M4 2l1.500-2L7 2M13 8l2 2-2 2" stroke={brown} strokeWidth="1.300" /><Eye x={6} y={9} /></>],
  ["注释显示", <><path d="M.5.5h9v6h-9z" fill="#fdf4e0" stroke="#888" /><path d="M10 3.500h5v5M13 5.500l2 3 1-3" stroke="#444" /><Eye x={7} y={9} /></>],
  ["旋转中心", <><path d="M3 3l5 5h5M8 8l-5 5" stroke="#444" strokeWidth="1.300" /><circle cx="3" cy="3" r="2.500" fill="#3da558" /><circle cx="13" cy="8" r="2.500" fill="#e0605c" /><circle cx="3" cy="13" r="2.500" fill="#2b88b9" /></>],
  ["仿真", <><path d="M8 1l7 13H1z" fill="#ddd" stroke="#b0b0b0" strokeWidth="1.600" /><path d="M8 6l3 6H5z" fill="#fff" stroke="#aaa" /><circle cx="13" cy="12" r="3" fill="#eee" stroke="#aaa" /></>],
  ["暂停仿真", <path d="M3 2h4v12H3zM9 2h4v12H9z" fill="#a3a4a6" />],
  ["停止仿真", <><path d="M0 2h16v12H2c3-1 4-3 4-4H0z" fill="#c6c7c9" /><path d="M0 5h6c4 0 4 6 0 6" fill="#a3a4a6" /></>],
];

function Graphics() {
  return (
    <Viewport>
      <ViewBar>
        {viewTools.map(([name, art]) => (
          <ViewButton key={name} aria-label={name}>
            <Icon w={18} h={18} box="-1 -1 18 18">{art}</Icon>
          </ViewButton>
        ))}
      </ViewBar>
      <Model>
        <Icon w={490} h={140}>
          <defs>
            <linearGradient id="fillet-left">
              <stop offset="0" stopColor="#8499b0" />
              <stop offset=".7" stopColor="#b5c5d9" />
              <stop offset="1" stopColor="#96a8bb" />
            </linearGradient>
            <linearGradient id="fillet-right">
              <stop offset="0" stopColor="#a3b0be" />
              <stop offset="1" stopColor="#505864" />
            </linearGradient>
          </defs>
          <path
            d="M18.500 128.500V90L21 76h7.500v37.500h363V70l5-3 3 15 2 8v38.500z"
            fill="#fafafa"
            stroke="#222"
          />
          <path d="M29 76h60v7H29z" fill="url(#fillet-left)" />
          <path d="M89 76h241v7H89z" fill="#9cabbb" />
          <path d="M330 76h61v7h-61z" fill="url(#fillet-right)" />
          <path d="M28 83.500h363M89.500 76v7M330.500 76v7" stroke="#222" />
          <path d="M37 71h350v5H37z" fill="#ff3430" />
          <path d="M26 66V25h-4l6-16 6 16h-4v41z" fill="#ffcc66" />
          <circle cx="28" cy="73.500" r="9.500" fill="#ffcc66" stroke="#d0605a" strokeDasharray="4 1" />
          <circle cx="28" cy="73.500" r="4.500" stroke="#e06a50" />
          <circle cx="391" cy="73" r="6.500" fill="#ffcc00" stroke="#e0c020" />
          <circle cx="391" cy="73" r="5.500" stroke="#4d4510" />
          <path d="M67 28.500H43L31 64M305 28.500h-24L268 67M430 28.500h-23L394 66" stroke="#00003c" />
          <path d="M31 64l1-9 4 1zM268 67l2-11 4 1zM394 66l1-11 4 1z" fill="#00003c" />
          <path d="M67 17h47v22H67zM305 17h29v22h-29zM430 17h47v22h-47z" fill="#dae3ee" />
          <text x="73" y="33">0.00</text>
          <text className="small" x="311" y="31">原点</text>
          <text x="437" y="33">0.00</text>
        </Icon>
      </Model>
      <Mode>插入模式</Mode>
      <Watermark>
        <strong>
          <em>野</em>
          <em>火</em>
          <span>论</span>
          <span>坛</span>
        </strong>
        <Icon w={18} h={42}>
          <path d="M5 0c9 10 15 20 11 30-2 7-7 11-12 11-3 0-4-3-3-6 4-5 5-10 4-16l-2-8c5 5 7 9 7 15 2-9 0-17-5-26z" fill="#ff6a32" />
        </Icon>
        <small>www.proewildfire.cn</small>
      </Watermark>
    </Viewport>
  );
}

/* ---------- page ---------- */

const Page = styled.div`
  position: relative;
  display: flex;
  flex-direction: column;
  height: 100vh;
`;

/* red hint drawn over the ribbon */
const Hint = styled.div`
  position: absolute;
  top: 97px;
  left: 225px;
  display: flex;
  align-items: flex-end;
  gap: 26px;
  color: #ff2015;
  font-size: 21px;
  line-height: 24px;
  pointer-events: none;

  svg {
    margin-bottom: 8px;
  }
`;

export default function App() {
  return (
    <Page>
      <GlobalStyle />
      <Title />
      <Menu />
      <RibbonBar />
      <Workspace>
        <SidePanels />
        <Graphics />
        <ReferenceSlide />
      </Workspace>
      <Hint>
        <Icon w={60} h={59}>
          <path d="M0 0l16 4-2 4 45 48-1 2L8 15l-4 3z" fill="#ff2015" />
        </Icon>
        点草绘
      </Hint>
    </Page>
  );
}
